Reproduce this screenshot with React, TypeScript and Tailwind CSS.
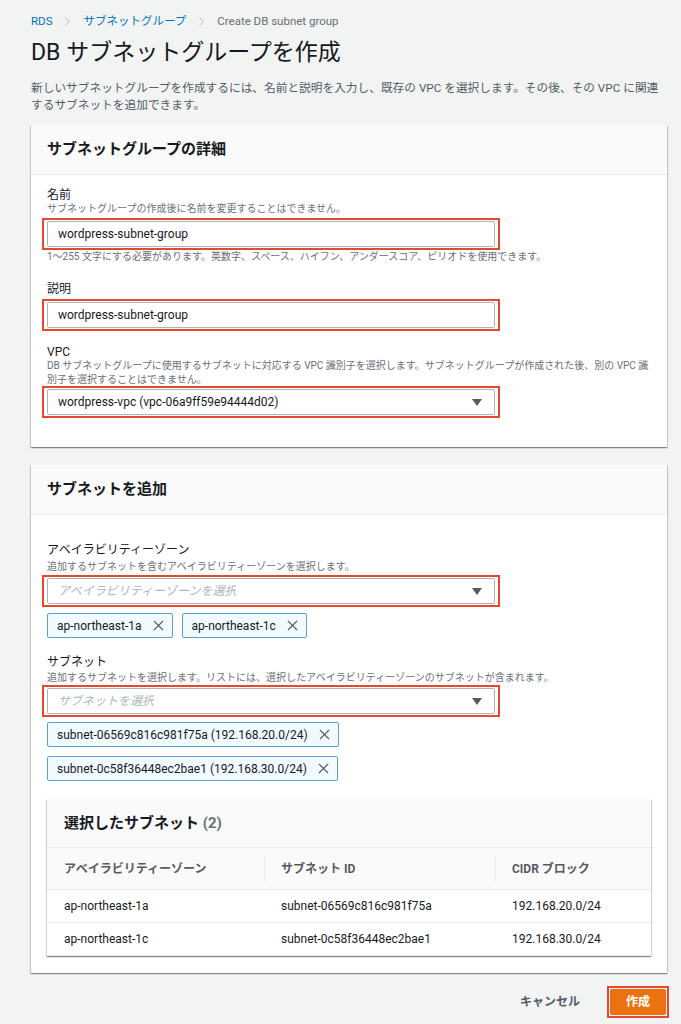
import { ChevronRight, X } from "lucide-react";

const font = "font-['Roboto','Noto_Sans_CJK_JP',sans-serif]";
const cardShadow =
    "shadow-[0_1px_1px_0_rgba(0,28,36,0.3),1px_1px_1px_0_rgba(0,28,36,0.15),-1px_1px_1px_0_rgba(0,28,36,0.15)]";

function Caret() {
    return (
        <svg width="10" height="7" viewBox="0 0 10 7" className="shrink-0">
            <path d="M0 0 L10 0 L5 7 Z" fill="#545b64" />
        </svg>
    );
}

function Field({ children, select }: { children: React.ReactNode; select?: boolean }) {
    return (
        <div className="relative w-[448px]">
            <div className="h-[26px] border border-[#aab7b8] rounded-[2px] bg-white flex items-center justify-between pl-[10px] pr-[12px] text-[12px]">
                <span className="truncate">{children}</span>
                {select && <Caret />}
            </div>
            {/* red annotation box */}
            <div className="absolute -inset-x-[5px] -inset-y-[3px] border-2 border-[#e8472f] pointer-events-none" />
        </div>
    );
}

function Token({ label }: { label: string }) {
    return (
        <div className="inline-flex h-[25px] items-center gap-[8px] border border-[#5e9fcf] bg-[#f1faff] rounded-[2px] pl-[9px] pr-[5px] text-[12px] text-[#16191f]">
            {label}
            <X className="w-[17px] h-[17px] text-[#545b64]" strokeWidth={1.6} />
        </div>
    );
}

export default function App() {
    return (
        <div className={`min-h-screen bg-[#f2f3f3] text-[#16191f] ${font}`}>
            <div className="pl-[31px] pr-[14px] pt-[13px] pb-[12px]">

                {/* Breadcrumb */}
                <div className="flex items-center h-[16px] text-[11.5px] leading-[16px]">
                    <span className="text-[#0073bb]">RDS</span>
                    <ChevronRight className="w-[15px] h-[15px] mx-[8px] text-[#aab7b8]" strokeWidth={1.5} />
                    <span className="text-[#0073bb]">サブネットグループ</span>
                    <ChevronRight className="w-[15px] h-[15px] mx-[8px] text-[#aab7b8]" strokeWidth={1.5} />
                    <span className="text-[#687078]">Create DB subnet group</span>
                </div>

                <h1 className="mt-[9px] text-[23px] leading-[30px] font-normal">DB サブネットグループを作成</h1>

                <p className="mt-[12px] text-[11.7px] leading-[17px] text-[#545b64]">
                    新しいサブネットグループを作成するには、名前と説明を入力し、既存の VPC を選択します。その後、その VPC に関連<br />
                    するサブネットを追加できます。
                </p>

                {/* Card: details */}
                <div className={`mt-[11px] bg-white ${cardShadow}`}>
                    <div className="h-[50px] bg-[#fafafa] border-b border-[#eaeded] px-[16px] flex items-center">
                        <h2 className="text-[15px] font-bold">サブネットグループの詳細</h2>
                    </div>
                    <div className="px-[16px] pt-[13px] pb-[32px]">
                        <div className="text-[12px] leading-[14px]">名前</div>
                        <div className="text-[10px] leading-[14px] text-[#687078]">サブネットグループの作成後に名前を変更することはできません。</div>
                        <div className="mt-[5px]">
                            <Field>wordpress-subnet-group</Field>
                        </div>
                        <div className="mt-[3px] text-[10px] leading-[14px] text-[#687078]">
                            1〜255 文字にする必要があります。英数字、スペース、ハイフン、アンダースコア、ピリオドを使用できます。
                        </div>

                        <div className="mt-[18px] text-[12px] leading-[14px]">説明</div>
                        <div className="mt-[6px]">
                            <Field>wordpress-subnet-group</Field>
                        </div>

                        <div className="mt-[17px] text-[12px] leading-[14px]">VPC</div>
                        <div className="text-[10px] leading-[14px] text-[#687078]">
                            DB サブネットグループに使用するサブネットに対応する VPC 識別子を選択します。サブネットグループが作成された後、別の VPC 識<br />
                            別子を選択することはできません。
                        </div>
                        <div className="mt-[2px]">
                            <Field select>wordpress-vpc (vpc-06a9ff59e94444d02)</Field>
                        </div>
                    </div>
                </div>

                {/* Card: add subnets */}
                <div className={`mt-[18px] bg-white ${cardShadow}`}>
                    <div className="h-[50px] bg-[#fafafa] border-b border-[#eaeded] px-[16px] flex items-center">
                        <h2 className="text-[15px] font-bold">サブネットを追加</h2>
                    </div>
                    <div className="px-[16px] pt-[28px] pb-[17px]">
                        <div className="text-[12px] leading-[14px]">アベイラビリティーゾーン</div>
                        <div className="mt-[3px] text-[10px] leading-[14px] text-[#687078]">追加するサブネットを含むアベイラビリティーゾーンを選択します。</div>
                        <div className="mt-[4px]">
                            <Field select>
                                <span className="italic text-[#aab7b8]">アベイラビリティーゾーンを選択</span>
                            </Field>
                        </div>
                        <div className="mt-[9px] flex gap-[9px]">
                            <Token label="ap-northeast-1a" />
                            <Token label="ap-northeast-1c" />
                        </div>

                        <div className="mt-[17px] text-[12px] leading-[14px]">サブネット</div>
                        <div className="mt-[2px] text-[10px] leading-[14px] text-[#687078]">追加するサブネットを選択します。リストには、選択したアベイラビリティーゾーンのサブネットが含まれます。</div>
                        <div className="mt-[3px]">
                            <Field select>
                                <span className="italic text-[#aab7b8]">サブネットを選択</span>
                            </Field>
                        </div>
                        <div className="mt-[8px] flex flex-col items-start gap-[9px]">
                            <Token label="subnet-06569c816c981f75a (192.168.20.0/24)" />
                            <Token label="subnet-0c58f36448ec2bae1 (192.168.30.0/24)" />
                        </div>

                        {/* Selected subnets table */}
                        <div className={`mt-[18px] bg-white ${cardShadow}`}>
                            <div className="h-[49px] bg-[#fafafa] border-b border-[#eaeded] px-[17px] flex items-center">
                                <h3 className="text-[15px] font-bold">
                                    選択したサブネット <span className="text-[#687078]">(2)</span>
                                </h3>
                            </div>
                            <div className="grid grid-cols-[217px_231px_1fr] text-[12px]">
                                <div className="h-[42px] bg-[#fafafa] border-b border-[#eaeded] flex items-center pl-[17px] font-bold text-[#545b64]">アベイラビリティーゾーン</div>
                                <div className="h-[42px] bg-[#fafafa] border-b border-[#eaeded] flex items-center">
                                    <span className="h-[26px] border-l border-[#eaeded]" />
                                    <span className="pl-[16px] font-bold text-[#545b64]">サブネット ID</span>
                                </div>
                                <div className="h-[42px] bg-[#fafafa] border-b border-[#eaeded] flex items-center">
                                    <span className="h-[26px] border-l border-[#eaeded]" />
                                    <span className="pl-[16px] font-bold text-[#545b64]">CIDR ブロック</span>
                                </div>

                                <div className="h-[33px] border-b border-[#eaeded] flex items-center pl-[17px]">ap-northeast-1a</div>
                                <div className="h-[33px] border-b border-[#eaeded] flex items-center pl-[17px]">subnet-06569c816c981f75a</div>
                                <div className="h-[33px] border-b border-[#eaeded] flex items-center pl-[17px]">192.168.20.0/24</div>

                                <div className="h-[33px] border-b border-[#eaeded] flex items-center pl-[17px]">ap-northeast-1c</div>
                                <div className="h-[33px] border-b border-[#eaeded] flex items-center pl-[17px]">subnet-0c58f36448ec2bae1</div>
                                <div className="h-[33px] border-b border-[#eaeded] flex items-center pl-[17px]">192.168.30.0/24</div>
                            </div>
                        </div>
                    </div>
                </div>

                {/* Footer */}
                <div className="mt-[16px] flex items-center justify-end gap-[30px] pr-[1px]">
                    <span className="text-[12px] font-bold text-[#545b64]">キャンセル</span>
                    <div className="relative">
                        <button className="h-[26px] w-[56px] rounded-[2px] bg-[#ec7211] text-white text-[12px] font-bold">作成</button>
                        <div className="absolute -inset-[3px] border-2 border-[#e8472f] pointer-events-none" />
                    </div>
                </div>
            </div>
        </div>
    );
}
